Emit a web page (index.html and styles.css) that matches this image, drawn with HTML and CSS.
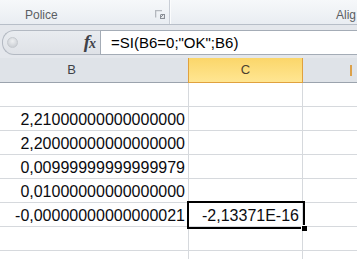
FILE: index.html
```
<!DOCTYPE html>
<html>
<head>
<meta charset="utf-8">
<link rel="stylesheet" href="styles.css">
</head>
<body>
<div class="ribbon">
  <div class="group police">
    <span class="glabel">Police</span>
    <svg class="launcher" width="10" height="9" viewBox="0 0 10 9">
      <path d="M0.5 7.5V0.5H7" fill="none" stroke="#b4b8be" stroke-width="1.6"/>
      <rect x="5" y="4" width="5" height="5" fill="#8a8f96"/>
      <path d="M5.5 4.5L8.5 7.5M8.5 5V7.5H6" fill="none" stroke="#e8eaed" stroke-width="1"/>
    </svg>
  </div>
  <div class="group align">
    <span class="glabel">Alig</span>
  </div>
</div>
<div class="fbar">
  <div class="namebox">
    <span class="dot"></span>
    <span class="fx">f<span class="fxx">x</span></span>
  </div>
  <div class="finput">=SI(B6=0;"OK";B6)</div>
</div>
<div class="sheet">
  <div class="row hdr">
    <div class="cell ch">B</div>
    <div class="cell ch selcol">C</div>
    <div class="cell ch colD"><span class="dmark"></span></div>
  </div>
  <div class="row"><div class="cell"></div><div class="cell"></div><div class="cell"></div></div>
  <div class="row"><div class="cell">2,21000000000000000</div><div class="cell"></div><div class="cell"></div></div>
  <div class="row"><div class="cell">2,20000000000000000</div><div class="cell"></div><div class="cell"></div></div>
  <div class="row"><div class="cell">0,00999999999999979</div><div class="cell"></div><div class="cell"></div></div>
  <div class="row"><div class="cell">0,01000000000000000</div><div class="cell"></div><div class="cell"></div></div>
  <div class="row"><div class="cell">-0,00000000000000021</div><div class="cell active">-2,13371E-16</div><div class="cell"></div></div>
  <div class="row"><div class="cell"></div><div class="cell"></div><div class="cell"></div></div>
  <div class="row"><div class="cell"></div><div class="cell"></div><div class="cell"></div></div>
</div>
</body>
</html>
```

FILE: styles.css
```
html, body {
  margin: 0;
  padding: 0;
  background: #ffffff;
  overflow: hidden;
  width: 357px;
  height: 259px;
}
body {
  font-family: "Liberation Sans", Arial, sans-serif;
}
.ribbon {
  height: 24px;
  display: flex;
  background: linear-gradient(#f6f8fa, #e9edf2);
  border-bottom: 1px solid #b7bec8;
}
.group {
  display: flex;
  align-items: center;
  position: relative;
}
.police {
  width: 169px;
  border-right: 1px solid #c9ced6;
  box-shadow: 1px 0 0 #fbfcfd;
}
.glabel {
  font-size: 12px;
  color: #5b5e63;
  padding-top: 6px;
}
.police .glabel {
  margin-left: 25px;
}
.launcher {
  margin-left: auto;
  margin-right: 4px;
  margin-top: 5px;
}
.align {
  flex: 1;
  justify-content: flex-end;
}
.align .glabel {
  margin-right: 1px;
}
.fbar {
  height: 25px;
  padding: 5px 0 3px 2px;
  display: flex;
  background: #e4e7ec;
}
.namebox {
  width: 97px;
  height: 23px;
  border: 1px solid #b3b9c2;
  border-right: none;
  border-radius: 12px 0 0 12px;
  background: linear-gradient(#e9ecf0, #dfe2e7);
  display: flex;
  align-items: center;
}
.dot {
  width: 9px;
  height: 9px;
  border-radius: 50%;
  margin-left: 4px;
  background: radial-gradient(circle at 50% 35%, #eef0f2, #c3c7cd);
  border: 0.5px solid #c5c9ce;
}
.fx {
  margin-left: auto;
  margin-right: 5px;
  font-family: "Liberation Serif", "Times New Roman", serif;
  font-style: italic;
  font-weight: bold;
  font-size: 19px;
  line-height: 19px;
  color: #3f4249;
  letter-spacing: -1px;
}
.fxx {
  font-size: 14px;
}
.finput {
  flex: 1;
  height: 23px;
  border: 1px solid #a4acb6;
  border-right: none;
  background: #ffffff;
  font-size: 15px;
  line-height: 23px;
  padding-left: 10px;
  color: #000;
  white-space: nowrap;
}
.sheet {
  margin-left: -45px;
}
.row {
  display: grid;
  grid-template-columns: 234px 114px 114px;
  height: 24px;
}
.cell {
  box-sizing: border-box;
  border-right: 1px solid #d6d9dd;
  border-bottom: 1px solid #d6d9dd;
  display: flex;
  align-items: center;
  justify-content: flex-end;
  padding-right: 3px;
  font-size: 16px;
  line-height: 18px;
  color: #0b0b10;
  white-space: nowrap;
  padding-top: 2px;
}
.hdr {
  height: 25px;
}
.ch {
  background: #dfe3e8;
  border-right: 1px solid #c4c9d0;
  border-bottom: 1px solid #9ba3ad;
  justify-content: center;
  font-size: 13px;
  color: #3e4247;
  padding: 0;
}
.selcol {
  background: linear-gradient(#fbd66a, #ffe692);
  border: 1px solid #e0a13e;
  border-top: none;
  margin-left: -1px;
  color: #4b4030;
}
.colD {
  justify-content: flex-start;
  padding-left: 47px;
}
.dmark {
  width: 2px;
  height: 11px;
  background: #dca14a;
}
.active {
  position: relative;
  outline: 2px solid #000;
  outline-offset: 0;
  z-index: 1;
}
.active::after {
  content: "";
  position: absolute;
  right: -5px;
  bottom: -5px;
  width: 5px;
  height: 5px;
  background: #000;
  border: 1px solid #fff;
  border-right: none;
  border-bottom: none;
}
```
